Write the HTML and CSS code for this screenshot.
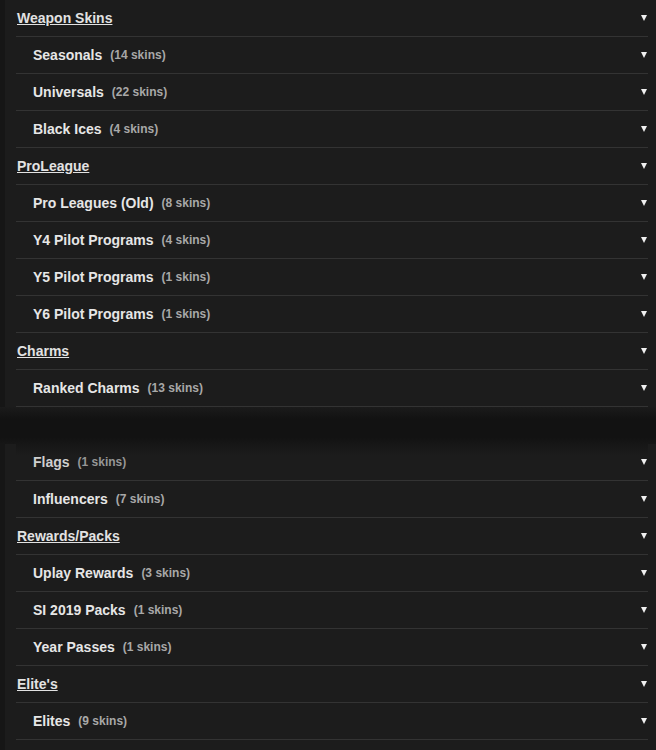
FILE: index.html
```html
<!DOCTYPE html>
<html lang="en">
<head>
    <meta charset="UTF-8">
    <meta name="viewport" content="width=device-width, initial-scale=1.0">
    <title>Skin Categories</title>
    <link rel="stylesheet" href="styles.css">
</head>
<body>
    <div class="panel">
        <ul class="menu">
            <li class="row header"><a href="#">Weapon Skins</a><span class="arrow"></span></li>
            <li class="row item"><span class="name">Seasonals</span><span class="count">(14 skins)</span><span class="arrow"></span></li>
            <li class="row item"><span class="name">Universals</span><span class="count">(22 skins)</span><span class="arrow"></span></li>
            <li class="row item"><span class="name">Black Ices</span><span class="count">(4 skins)</span><span class="arrow"></span></li>
            <li class="row header"><a href="#">ProLeague</a><span class="arrow"></span></li>
            <li class="row item"><span class="name">Pro Leagues (Old)</span><span class="count">(8 skins)</span><span class="arrow"></span></li>
            <li class="row item"><span class="name">Y4 Pilot Programs</span><span class="count">(4 skins)</span><span class="arrow"></span></li>
            <li class="row item"><span class="name">Y5 Pilot Programs</span><span class="count">(1 skins)</span><span class="arrow"></span></li>
            <li class="row item"><span class="name">Y6 Pilot Programs</span><span class="count">(1 skins)</span><span class="arrow"></span></li>
            <li class="row header"><a href="#">Charms</a><span class="arrow"></span></li>
            <li class="row item"><span class="name">Ranked Charms</span><span class="count">(13 skins)</span><span class="arrow"></span></li>
        </ul>
    </div>

    <div class="gap"></div>

    <div class="panel panel-last">
        <ul class="menu">
            <li class="row item faded"><span class="name">Flags</span><span class="count">(1 skins)</span><span class="arrow"></span></li>
            <li class="row item"><span class="name">Influencers</span><span class="count">(7 skins)</span><span class="arrow"></span></li>
            <li class="row header"><a href="#">Rewards/Packs</a><span class="arrow"></span></li>
            <li class="row item"><span class="name">Uplay Rewards</span><span class="count">(3 skins)</span><span class="arrow"></span></li>
            <li class="row item"><span class="name">SI 2019 Packs</span><span class="count">(1 skins)</span><span class="arrow"></span></li>
            <li class="row item"><span class="name">Year Passes</span><span class="count">(1 skins)</span><span class="arrow"></span></li>
            <li class="row header"><a href="#">Elite's</a><span class="arrow"></span></li>
            <li class="row item"><span class="name">Elites</span><span class="count">(9 skins)</span><span class="arrow"></span></li>
        </ul>
    </div>
</body>
</html>
```

FILE: styles.css
```css
body {
    margin: 0;
    padding: 0;
    background-color: #1c1c1c;
    font-family: 'Liberation Sans', Arial, sans-serif;
    overflow: hidden;
}
.panel {
    background-color: #1c1c1c;
    border-left: 5px solid #161616;
}
.panel-last {
    padding-bottom: 20px;
}
.menu {
    list-style: none;
    margin: 0 8px 0 11px;
    padding: 0;
}
.row {
    display: flex;
    align-items: center;
    height: 36px;
    border-bottom: 1px solid #333333;
    padding-right: 1px;
}
.header {
    padding-left: 1px;
}
.header a {
    color: #e2e2e2;
    font-size: 14px;
    font-weight: bold;
    text-decoration: underline;
}
.item {
    padding-left: 17px;
}
.name {
    color: #e6e6e6;
    font-size: 14px;
    font-weight: bold;
}
.count {
    color: #a8a8a8;
    font-size: 12px;
    font-weight: bold;
    margin-left: 8px;
}
.arrow {
    margin-left: auto;
    width: 0;
    height: 0;
    border-left: 3.5px solid transparent;
    border-right: 3.5px solid transparent;
    border-top: 6px solid #f0f0f0;
}
.gap {
    height: 37px;
    background: linear-gradient(to bottom, #1b1b1b 0, #121212 12px, #121212 30px, #161616 37px);
}
.faded {
    background: linear-gradient(to bottom, #161616 0, #1c1c1c 12px);
}
.faded .name {
    color: #cfcfcf;
}
.faded .count {
    color: #969696;
}
```
